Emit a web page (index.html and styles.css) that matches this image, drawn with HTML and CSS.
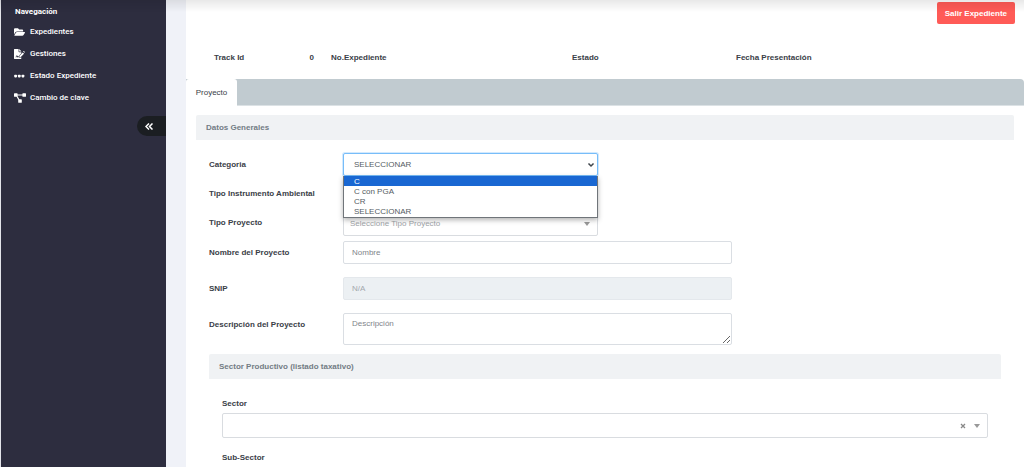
FILE: index.html
```
<!DOCTYPE html>
<html lang="es">
<head>
<meta charset="utf-8">
<meta name="viewport" content="width=device-width, initial-scale=1">
<title>Expediente</title>
<link rel="stylesheet" href="styles.css">
</head>
<body>
<div class="layout">
  <nav class="sidebar" aria-label="Navegación">
    <h2 class="nav-title">Navegación</h2>
    <ul class="nav-list">
      <li><a class="nav-link" href="#"><svg class="nav-icon" viewBox="0 0 576 512" aria-hidden="true"><path d="M573 295l-73 124c-13 23-38 37-64 37H44c-19 0-30-20-21-36l73-125c13-22 37-36 63-36h393c19 0 30 20 21 36zM159 227h321v-53c0-27-21-48-48-48H272l-64-64H48c-27 0-48 21-48 48v278l69-117c19-28 52-44 90-44z"/></svg>Expedientes</a></li>
      <li><a class="nav-link" href="#"><svg class="nav-icon" viewBox="0 0 576 512" aria-hidden="true"><path d="M24 0h216v136c0 13 11 24 24 24h120v58L268 334v67c-14 0-19-1-25-12-12-24-39-30-60-16l-15-44c-6-17-30-17-36 0l-18 55c-2 8-9 12-17 12H80v32h17c22 0 41-14 48-34l5-15 15 44c5 14 24 15 30 2l7-15c4-8 14-8 18 0 10 20 28 23 48 23h116v55c0 13-11 24-24 24H24c-13 0-24-11-24-24V24C0 11 11 0 24 0zm248 0l112 112v16H272zm17 344l169-166 67 67-168 169h-68zm272-168l-20 20-67-67 20-20c9-9 24-9 33 0l34 34c9 9 9 24 0 33z"/></svg>Gestiones</a></li>
      <li><a class="nav-link" href="#"><svg class="nav-icon" viewBox="0 0 576 512" aria-hidden="true"><rect x="10" y="184" width="148" height="144" rx="40"/><rect x="202" y="184" width="148" height="144" rx="40"/><rect x="394" y="184" width="148" height="144" rx="40"/></svg>Estado Expediente</a></li>
      <li><a class="nav-link" href="#"><svg class="nav-icon nav-icon-wide" viewBox="0 0 640 512" aria-hidden="true"><path d="M32 0h128c18 0 32 14 32 32v32h256V32c0-18 14-32 32-32h128c18 0 32 14 32 32v128c0 18-14 32-32 32H480c-18 0-32-14-32-32v-32H192v30l93 162h99c18 0 32 14 32 32v128c0 18-14 32-32 32H256c-18 0-32-14-32-32V343l-87-151H32c-18 0-32-14-32-32V32C0 14 14 0 32 0z"/></svg>Cambio de clave</a></li>
    </ul>
    <button class="collapse" type="button" aria-label="Contraer menú"><svg class="collapse-icon" viewBox="0 0 16 14" aria-hidden="true"><path d="M8 1L2 7l6 6M15 1L9 7l6 6"/></svg></button>
  </nav>

  <main class="main">
    <div class="toolbar"><button class="exit" type="button">Salir Expediente</button></div>
    <div class="summary">
      <div class="track"><span>Track Id</span><span>0</span></div>
      <span>No.Expediente</span>
      <span>Estado</span>
      <span>Fecha Presentación</span>
    </div>
    <div class="tabs" role="tablist"><button class="tab" type="button" role="tab" aria-selected="true">Proyecto</button></div>

    <form class="panel">
      <h3 class="section-title">Datos Generales</h3>
      <div class="fields">
        <div class="row row-short">
          <label class="label" for="categoria">Categoria</label>
          <div class="select-box">
            <select class="control select" id="categoria"><option>SELECCIONAR</option><option>C</option><option>C con PGA</option><option>CR</option></select>
            <svg class="chevron" viewBox="0 0 8 6" aria-hidden="true"><path d="M2 2l2 2 2-2"/></svg>
            <ul class="menu" role="listbox" aria-label="Categoria">
              <li class="option option-active" role="option" aria-selected="true">C</li>
              <li class="option" role="option">C con PGA</li>
              <li class="option" role="option">CR</li>
              <li class="option" role="option">SELECCIONAR</li>
            </ul>
          </div>
        </div>
        <div class="row row-short"><span class="label">Tipo Instrumento Ambiental</span></div>
        <div class="row row-short">
          <label class="label" for="tipo">Tipo Proyecto</label>
          <div class="combo"><input class="combo-input" id="tipo" type="text" role="combobox" aria-expanded="false" placeholder="Seleccione Tipo Proyecto"><span class="caret"></span></div>
        </div>
        <div class="row">
          <label class="label" for="nombre">Nombre del Proyecto</label>
          <input class="control" id="nombre" type="text" placeholder="Nombre">
        </div>
        <div class="row row-spaced">
          <label class="label" for="snip">SNIP</label>
          <input class="control" id="snip" type="text" placeholder="N/A" disabled>
        </div>
        <div class="row row-spaced">
          <label class="label" for="descripcion">Descripción del Proyecto</label>
          <textarea class="control area" id="descripcion" placeholder="Descripción"></textarea>
        </div>
        <h3 class="section-title section-inner">Sector Productivo (listado taxativo)</h3>
        <div class="sector">
          <label class="sector-label" for="sector">Sector</label>
          <div class="combo"><input class="combo-input" id="sector" type="text" role="combobox" aria-expanded="false"><button class="clear" type="button" aria-label="Limpiar"><svg class="clear-icon" viewBox="0 0 6 6" aria-hidden="true"><path d="M1 1l4 4M5 1L1 5"/></svg></button><span class="caret"></span></div>
          <span class="sector-label sub-label">Sub-Sector</span>
        </div>
      </div>
    </form>
  </main>
</div>
<div class="top-shadow"></div>
</body>
</html>
```
FILE: styles.css
```
* { box-sizing: border-box; }
body {
  margin: 0;
  height: 100vh;
  overflow: hidden;
  background: #f0f2f8;
  color: #3a4047;
  font: 8px/12px "Liberation Sans", Arial, sans-serif;
}
button, input, select, textarea { font: inherit; color: inherit; }
h2, h3, ul { margin: 0; padding: 0; font-size: inherit; list-style: none; }

.layout { display: flex; min-height: 100vh; }
.sidebar {
  flex: 0 0 166px;
  display: flex;
  flex-direction: column;
  border-left: 1px solid #e3e4ea;
  background: #2d2d3f;
  color: #fff;
  padding-top: 6px;
  font-family: Roboto, sans-serif;
  font-weight: 500;
}
.nav-title { padding-left: 14px; font-weight: 700; }
.nav-list { display: flex; flex-direction: column; gap: 10px; padding: 8px 0 0 13px; }
.nav-link { display: flex; align-items: center; gap: 5px; color: #fff; text-decoration: none; }
.nav-icon { width: 11px; height: 10px; fill: #fff; overflow: visible; }
.nav-icon-wide { width: 12px; margin-right: -1px; }
.collapse {
  align-self: flex-end;
  width: 29px;
  height: 20px;
  margin-top: 12px;
  padding: 0 0 0 8px;
  border: 0;
  border-radius: 10px 0 0 10px;
  background: #1b1e22;
  display: flex;
  align-items: center;
}
.collapse-icon { width: 8px; height: 7px; fill: none; stroke: #fff; stroke-width: 3; }

.main { flex: 1; min-width: 0; margin-left: 20px; background: #fff; }
.toolbar { display: flex; justify-content: flex-end; padding: 2px 9px 0 0; }
.exit {
  height: 22px;
  padding: 1px 8px 0;
  border: 0;
  border-radius: 2px;
  background: #ff5b57;
  color: #fff;
  font-weight: 700;
}
.summary {
  display: grid;
  grid-template-columns: 117fr 241fr 164fr 288fr;
  padding: 28px 0 15px 28px;
  font-weight: 700;
}
.track { display: flex; justify-content: space-between; padding-right: 17px; }
.tabs { height: 27px; background: #c1cbd0; border-bottom: 1px solid #dce2e5; border-radius: 0 4px 0 0; }
.tab { height: 27px; width: 51px; padding: 0; border: 0; border-radius: 3px 3px 0 0; background: #fff; }

.panel { padding: 9px 10px 0; }
.section-title {
  padding: 7px 10px 6px;
  border-radius: 2px 2px 0 0;
  background: #f0f2f4;
  color: #737c84;
  font-weight: 700;
}
.fields { padding: 13px 13px 0; }
.row { display: grid; grid-template-columns: 134px 389fr 269fr; margin-top: 5px; }
.row:first-child { margin-top: 0; }
.row-short { grid-template-columns: 134px 255fr 403fr; min-height: 23px; margin-top: 6px; }
.row-spaced { margin-top: 13px; }
.label { padding-top: 6px; font-weight: 700; }
.control {
  width: 100%;
  height: 23px;
  padding: 0 8px;
  border: 1px solid #dadee3;
  border-radius: 2px;
  background: #fff;
}
.control:disabled { background: #ecf0f3; border-color: #e4e8ec; }
.control::placeholder { color: #7f858b; opacity: 1; }
.control:disabled::placeholder { color: #a3a8ad; }
.area { display: block; height: 32px; padding-top: 4px; resize: vertical; }

.select-box { position: relative; }
.select { display: block; appearance: none; padding: 0 10px; border-color: #77bdf9; color: #555c63; box-shadow: 0 0 0 1px #d3e9fd; }
.chevron { position: absolute; right: 3px; top: 9px; width: 8px; height: 6px; fill: none; stroke: #3f454b; stroke-width: 1.5; stroke-linecap: square; }
.menu {
  position: absolute;
  z-index: 2;
  top: 23px;
  left: 0;
  right: 0;
  border: 1px solid #70757a;
  border-top: 0;
  padding-bottom: 1px;
  background: #fff;
  color: #555c63;
  box-shadow: 0 2px 5px rgba(0, 0, 0, .3);
}
.option { padding: 1px 10px 0; line-height: 9px; }
.option-active { background: #1967d2; color: #fff; }

.combo {
  display: flex;
  align-items: center;
  gap: 8px;
  height: 25px;
  padding: 0 7px 0 6px;
  border: 1px solid #d9dce0;
  border-radius: 2px;
  background: #fff;
}
.combo-input { flex: 1; min-width: 0; height: 20px; padding: 0; border: 0; background: none; outline: 0; }
.combo-input::placeholder { color: #a0a4a8; opacity: 1; }
.caret { border: 3px solid transparent; border-top: 4px solid #999; border-bottom: 0; }
.clear { padding: 0; border: 0; background: none; display: flex; }
.clear-icon { width: 6px; height: 6px; fill: none; stroke: #888; stroke-width: 1.3; }

.section-inner { margin-top: 9px; }
.sector { padding: 19px 13px 0; }
.sector-label { display: block; font-weight: 700; }
.sector .combo { margin-top: 3px; }
.sub-label { margin-top: 14px; }
.top-shadow {
  position: fixed;
  inset: 0 0 auto;
  height: 12px;
  background: linear-gradient(rgba(0, 0, 0, .09), transparent);
  pointer-events: none;
}
```
